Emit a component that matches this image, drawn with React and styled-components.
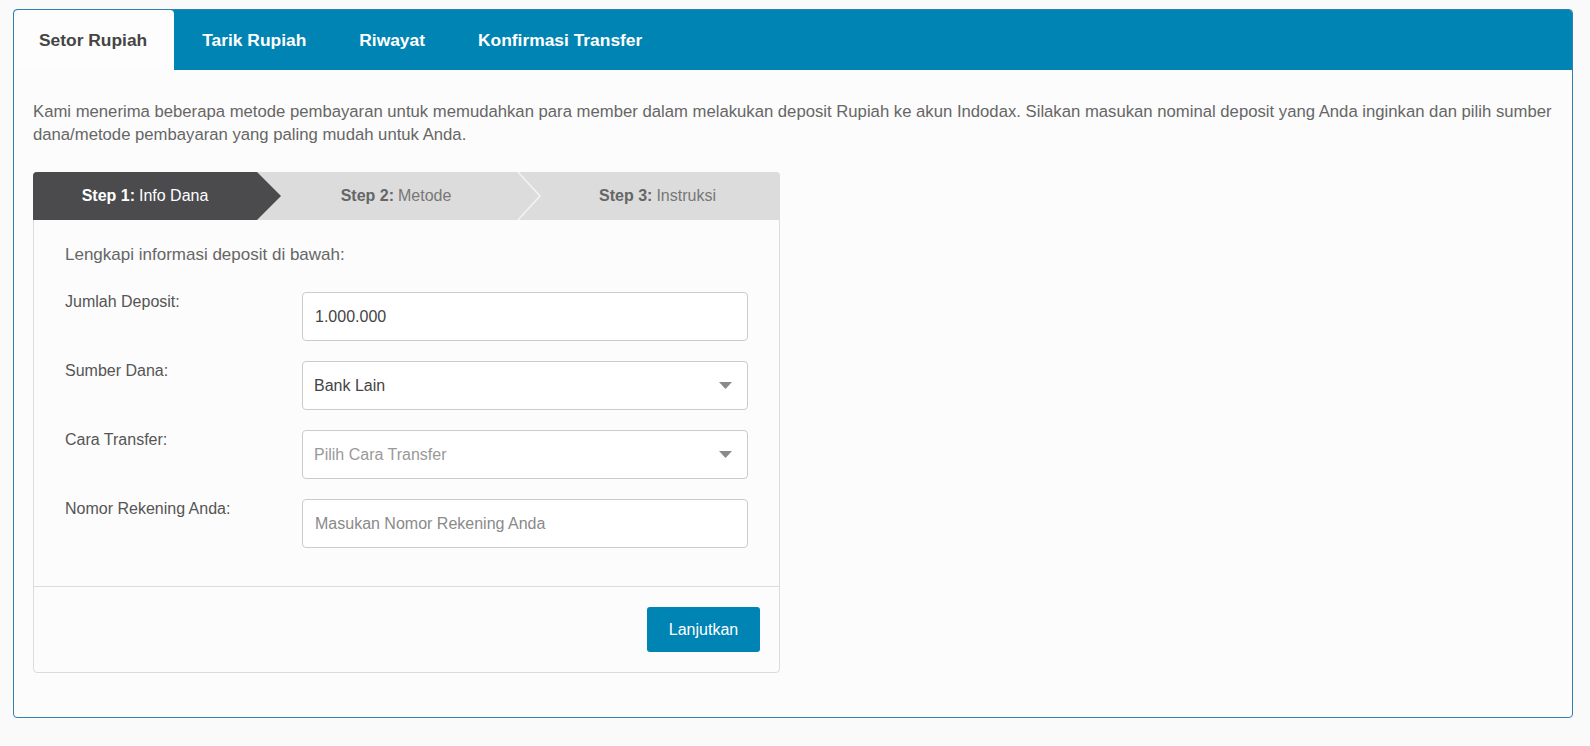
import React from "react";
import styled, { createGlobalStyle } from "styled-components";

const GlobalStyle = createGlobalStyle`
  * {
    box-sizing: border-box;
  }
  body {
    margin: 0;
    background: #fafafa;
    font-family: "Liberation Sans", Arial, sans-serif;
    color: #555;
  }
`;

const Page = styled.div`
  padding: 9px 17px 28px 13px;
`;

const Panel = styled.div`
  border: 1px solid #2f7fb3;
  border-radius: 4px;
  background: #fcfcfc;
  overflow: hidden;
`;

const TabBar = styled.div`
  display: flex;
  height: 60px;
  background: #0084b4;
`;

const Tab = styled.div`
  display: flex;
  align-items: center;
  padding: 0 ${(p) => (p.$active ? 27 : 25)}px 0 25px;
  margin-right: 3px;
  font-size: 17.4px;
  font-weight: bold;
  color: ${(p) => (p.$active ? "#454545" : "#fff")};
  background: ${(p) => (p.$active ? "#fdfdfd" : "transparent")};
  border-radius: 4px 4px 0 0;
  cursor: pointer;
`;

const PanelBody = styled.div`
  padding: 31px 4px 44px 19px;
`;

const Intro = styled.p`
  margin: 0 0 26px;
  font-size: 16.7px;
  line-height: 22.5px;
  color: #666;
`;

const Card = styled.div`
  width: 747px;
  border: 1px solid #dcdcdc;
  border-radius: 4px;
  background: #fcfcfc;
`;

const Stepper = styled.div`
  display: flex;
  height: 48px;
  margin: -1px -1px 0 -1px;
  background: #dcdcdc;
  border-radius: 4px 4px 0 0;
  overflow: hidden;
`;

const StepLabel = styled.div`
  flex: ${(p) => (p.$width ? `0 0 ${p.$width}px` : "1")};
  display: flex;
  align-items: center;
  justify-content: center;
  padding-right: ${(p) => (p.$active ? 0 : 6)}px;
  font-size: 16px;
  background: ${(p) => (p.$active ? "#4b4b4d" : "transparent")};
  color: ${(p) => (p.$active ? "#fff" : "#777")};

  b {
    margin-right: 4px;
    color: ${(p) => (p.$active ? "#fff" : "#666")};
  }
`;

const StepEdge = styled.svg`
  flex: 0 0 24px;
  display: block;
`;

const CardBody = styled.div`
  display: flex;
  flex-direction: column;
  gap: 20px;
  padding: 24px 31px 38px 31px;
`;

const Lead = styled.div`
  font-size: 17px;
  line-height: 22px;
  color: #666;
  margin-bottom: 6px;
`;

const FormRow = styled.div`
  display: flex;
  align-items: flex-start;
`;

const Label = styled.label`
  flex: 0 0 237px;
  font-size: 16px;
  line-height: 20px;
  color: #555;
`;

const TextInput = styled.input`
  flex: 1;
  height: 49px;
  padding: 0 12px;
  border: 1px solid #cbcbcb;
  border-radius: 4px;
  background: #fff;
  font-family: inherit;
  font-size: 16px;
  color: #444;
  outline: none;

  &::placeholder {
    color: #8a8a8a;
  }
`;

const SelectBox = styled.div`
  flex: 1;
  height: 49px;
  display: flex;
  align-items: center;
  justify-content: space-between;
  padding: 0 15px 0 11px;
  border: 1px solid #cbcbcb;
  border-radius: 4px;
  background: #fff;
  font-size: 16px;
  color: ${(p) => (p.$placeholder ? "#999" : "#444")};
  cursor: pointer;
`;

const CardFooter = styled.div`
  display: flex;
  justify-content: flex-end;
  padding: 20px 19px;
  border-top: 1px solid #dcdcdc;
`;

const Button = styled.button`
  width: 113px;
  height: 45px;
  border: none;
  border-radius: 3px;
  background: #0084b4;
  color: #fff;
  font-family: inherit;
  font-size: 16px;
  cursor: pointer;
`;

const Caret = () => (
  <svg width="13" height="7" viewBox="0 0 13 7">
    <polygon points="0,0 13,0 6.5,7" fill="#8a8a8a" />
  </svg>
);

const tabs = ["Setor Rupiah", "Tarik Rupiah", "Riwayat", "Konfirmasi Transfer"];

export default function App() {
  return (
    <>
      <GlobalStyle />
      <Page>
        <Panel>
          <TabBar>
            {tabs.map((t, i) => (
              <Tab key={t} $active={i === 0}>
                {t}
              </Tab>
            ))}
          </TabBar>
          <PanelBody>
            <Intro>
              Kami menerima beberapa metode pembayaran untuk memudahkan para
              member dalam melakukan deposit Rupiah ke akun Indodax. Silakan
              masukan nominal deposit yang Anda inginkan dan pilih sumber
              dana/metode pembayaran yang paling mudah untuk Anda.
            </Intro>
            <Card>
              <Stepper>
                <StepLabel $active $width={224}>
                  <b>Step 1:</b> Info Dana
                </StepLabel>
                <StepEdge width="24" height="48" viewBox="0 0 24 48">
                  <polygon points="0,0 24,24 0,48" fill="#4b4b4d" />
                </StepEdge>
                <StepLabel $width={236}>
                  <b>Step 2:</b> Metode
                </StepLabel>
                <StepEdge width="24" height="48" viewBox="0 0 24 48">
                  <polyline
                    points="0,-1 23,24 0,49"
                    fill="none"
                    stroke="#f4f4f4"
                    strokeWidth="1.5"
                  />
                </StepEdge>
                <StepLabel>
                  <b>Step 3:</b> Instruksi
                </StepLabel>
              </Stepper>
              <CardBody>
                <Lead>Lengkapi informasi deposit di bawah:</Lead>
                <FormRow>
                  <Label>Jumlah Deposit:</Label>
                  <TextInput defaultValue="1.000.000" />
                </FormRow>
                <FormRow>
                  <Label>Sumber Dana:</Label>
                  <SelectBox>
                    <span>Bank Lain</span>
                    <Caret />
                  </SelectBox>
                </FormRow>
                <FormRow>
                  <Label>Cara Transfer:</Label>
                  <SelectBox $placeholder>
                    <span>Pilih Cara Transfer</span>
                    <Caret />
                  </SelectBox>
                </FormRow>
                <FormRow>
                  <Label>Nomor Rekening Anda:</Label>
                  <TextInput placeholder="Masukan Nomor Rekening Anda" />
                </FormRow>
              </CardBody>
              <CardFooter>
                <Button>Lanjutkan</Button>
              </CardFooter>
            </Card>
          </PanelBody>
        </Panel>
      </Page>
    </>
  );
}
